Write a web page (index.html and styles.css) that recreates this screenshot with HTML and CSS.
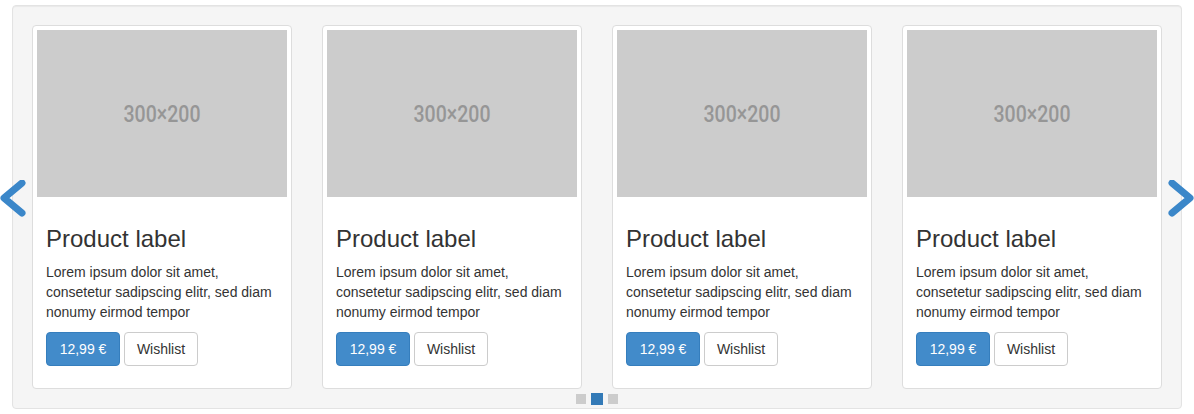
FILE: index.html
```html
<!DOCTYPE html>
<html lang="en">
<head>
<meta charset="utf-8">
<title>Product carousel</title>
<link rel="stylesheet" href="styles.css">
</head>
<body>
<div class="container">
  <div class="carousel">
    <div class="well">
      <div class="row">
        <div class="card">
          <div class="ph"><svg viewBox="0 0 250 167" width="250" height="167"><text x="125" y="92" text-anchor="middle" textLength="77" lengthAdjust="spacingAndGlyphs" class="ph-text">300×200</text></svg></div>
          <div class="caption">
            <h3>Product label</h3>
            <p>Lorem ipsum dolor sit amet, consetetur sadipscing elitr, sed diam nonumy eirmod tempor</p>
            <p class="actions"><a class="btn btn-primary">12,99 €</a><a class="btn btn-default">Wishlist</a></p>
          </div>
        </div>
        <div class="card">
          <div class="ph"><svg viewBox="0 0 250 167" width="250" height="167"><text x="125" y="92" text-anchor="middle" textLength="77" lengthAdjust="spacingAndGlyphs" class="ph-text">300×200</text></svg></div>
          <div class="caption">
            <h3>Product label</h3>
            <p>Lorem ipsum dolor sit amet, consetetur sadipscing elitr, sed diam nonumy eirmod tempor</p>
            <p class="actions"><a class="btn btn-primary">12,99 €</a><a class="btn btn-default">Wishlist</a></p>
          </div>
        </div>
        <div class="card">
          <div class="ph"><svg viewBox="0 0 250 167" width="250" height="167"><text x="125" y="92" text-anchor="middle" textLength="77" lengthAdjust="spacingAndGlyphs" class="ph-text">300×200</text></svg></div>
          <div class="caption">
            <h3>Product label</h3>
            <p>Lorem ipsum dolor sit amet, consetetur sadipscing elitr, sed diam nonumy eirmod tempor</p>
            <p class="actions"><a class="btn btn-primary">12,99 €</a><a class="btn btn-default">Wishlist</a></p>
          </div>
        </div>
        <div class="card">
          <div class="ph"><svg viewBox="0 0 250 167" width="250" height="167"><text x="125" y="92" text-anchor="middle" textLength="77" lengthAdjust="spacingAndGlyphs" class="ph-text">300×200</text></svg></div>
          <div class="caption">
            <h3>Product label</h3>
            <p>Lorem ipsum dolor sit amet, consetetur sadipscing elitr, sed diam nonumy eirmod tempor</p>
            <p class="actions"><a class="btn btn-primary">12,99 €</a><a class="btn btn-default">Wishlist</a></p>
          </div>
        </div>
      </div>
    </div>
    <a class="control control-left" aria-label="Previous"><svg width="26" height="40" viewBox="0 0 26 40"><polyline points="22,3 4,18 22,33" fill="none" stroke="#3b87c9" stroke-width="7" stroke-linecap="round" stroke-linejoin="round"/></svg></a>
    <a class="control control-right" aria-label="Next"><svg width="26" height="40" viewBox="0 0 26 40"><polyline points="4,3 22,18 4,33" fill="none" stroke="#3b87c9" stroke-width="7" stroke-linecap="round" stroke-linejoin="round"/></svg></a>
    <ol class="indicators">
      <li></li>
      <li class="active"></li>
      <li></li>
    </ol>
  </div>
</div>
</body>
</html>
```
FILE: styles.css
```css
* { box-sizing: border-box; }
html, body { margin: 0; padding: 0; background: #fff; }
body {
  font-family: "Liberation Sans", Arial, Helvetica, sans-serif;
  font-size: 14px;
  line-height: 20px;
  color: #333;
  padding-top: 5px;
}
.container { width: 1170px; margin: 0 auto; }
.carousel { position: relative; }
.well {
  background: #f5f5f5;
  border: 1px solid #e3e3e3;
  border-radius: 4px;
  box-shadow: inset 0 1px 1px rgba(0,0,0,.05);
  padding: 19px;
  height: 404px;
}
.row { display: flex; gap: 30px; }
.card {
  width: 260px;
  background: #fff;
  border: 1px solid #ddd;
  border-radius: 4px;
  padding: 4px;
  height: 364px;
}
.ph { width: 250px; height: 167px; background: #ccc; }
.ph svg { display: block; }
.ph-text {
  font-family: Roboto, "DejaVu Sans", sans-serif;
  font-size: 24px;
  font-weight: 500;
  fill: #969696;
}
.caption { padding: 9px; color: #333; }
.caption h3 {
  font-size: 24px;
  font-weight: 500;
  line-height: 26.4px;
  margin: 20px 0 10px;
  color: #333;
}
.caption p { margin: 0 0 10px; }
.actions { display: flex; gap: 4px; }
.btn {
  display: inline-block;
  width: 74px;
  height: 34px;
  padding: 6px 0;
  text-align: center;
  font-size: 14px;
  line-height: 20px;
  border: 1px solid transparent;
  border-radius: 4px;
  cursor: pointer;
}
.btn-primary { background: #428bca; border-color: #357ebd; color: #fff; }
.btn-default { background: #fff; border-color: #ccc; color: #333; }
.control { position: absolute; top: 175px; width: 26px; height: 40px; }
.control svg { display: block; }
.control-left { left: -12px; }
.control-right { right: -12px; }
.indicators {
  position: absolute;
  left: 0; right: 0;
  top: 388px;
  margin: 0; padding: 0;
  list-style: none;
  display: flex;
  justify-content: center;
  align-items: center;
  gap: 4px;
}
.indicators li { width: 10px; height: 10px; margin: 1px; background: #ccc; }
.indicators li.active { width: 12px; height: 12px; margin: 0; background: #337ab7; }
```
